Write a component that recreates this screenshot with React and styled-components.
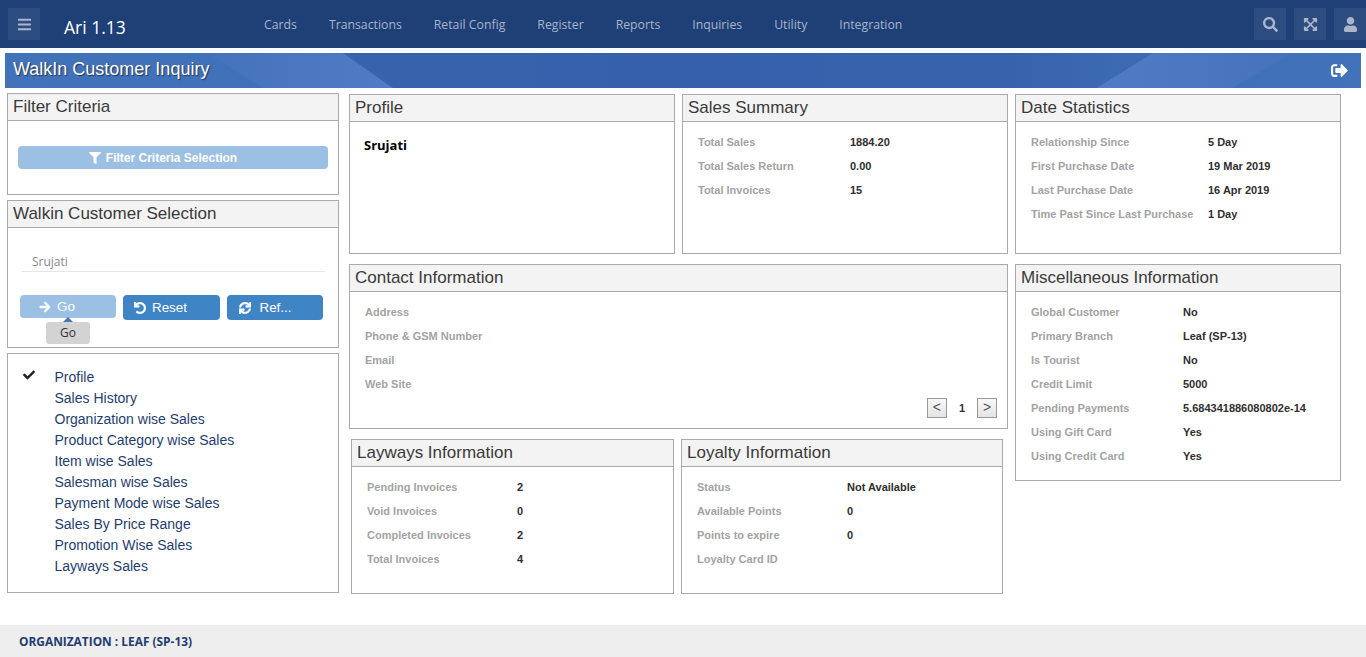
import React from "react";
import styled, { createGlobalStyle } from "styled-components";
import {
  FaBars, FaSearch, FaExpandArrowsAlt, FaUser, FaSignOutAlt, FaFilter,
  FaArrowRight, FaUndo, FaSync, FaCheck,
} from "react-icons/fa";

const Global = createGlobalStyle`
  html, body { margin: 0; padding: 0; background: #fff; }
  body { font-family: "Open Sans", "Liberation Sans", sans-serif; overflow: hidden; }
  * { box-sizing: border-box; }
`;
const Page = styled.div`
  width: 1366px; height: 657px; display: flex; flex-direction: column; position: relative;
`;
const Header = styled.header`
  height: 48px; background: #1f3f77; display: flex; align-items: flex-start;
  padding: 8px 0 0 8px; flex: none;
`;
const IconTile = styled.div`
  width: 32px; height: 32px; background: #2d4c80; color: #a9b6cb;
  display: flex; align-items: center; justify-content: center; font-size: 15px; flex: none;
`;
const Brand = styled.div`
  color: #fff; font-size: 17.5px; margin-left: 24px; width: 200px; line-height: 38px; flex: none;
`;
const Nav = styled.nav`
  display: flex; gap: 32px; height: 32px; align-items: center; flex: none;
`;
const NavItem = styled.span`
  color: #a7b4ca; font-size: 12.27px; white-space: nowrap;
`;
const HeaderTools = styled.div`
  margin-left: auto; display: flex; gap: 8px;
`;
const Banner = styled.div`
  height: 35px; margin: 5px 5px 0 5px; flex: none; position: relative; overflow: hidden;
  background: linear-gradient(90deg, #4272ba 0%, #4070b8 22%, #3763ad 26%, #3660ab 50%, #3763ad 74%, #4070b8 90%, #4272ba 100%);
  display: flex; align-items: center; justify-content: space-between; padding: 0 13px 3px 8px;
  &::before, &::after {
    content: ""; position: absolute; top: 0; bottom: 0; pointer-events: none;
  }
  &::before {
    left: 202px; width: 186px;
    background: linear-gradient(90deg, #4472bb, #4f7cc5);
    clip-path: polygon(0 0, 73% 0, 100% 100%, 30% 100%);
  }
  &::after {
    left: 1092px; width: 196px;
    background: linear-gradient(90deg, #4f7cc5, #4472bb);
    clip-path: polygon(28.5% 0, 100% 0, 69% 100%, 0 100%);
  }
`;
const BannerTitle = styled.h1`
  margin: 0; color: #fff; font: 400 18px "Liberation Sans", Arial, sans-serif;
  text-shadow: 1px 1px 1px #24344f; position: relative; z-index: 1;
`;
const ExitIcon = styled.span`
  color: #fff; font-size: 17px; display: flex; position: relative; z-index: 1; top: 1px;
`;
const Main = styled.main`
  display: flex; align-items: flex-start; padding-left: 7px; flex: 1;
`;
const LeftCol = styled.div`
  width: 332px; margin-top: 5px; display: flex; flex-direction: column; gap: 5px; flex: none;
`;
const MidCol = styled.div`
  width: 659px; margin: 6px 0 0 10px; display: flex; flex-direction: column; gap: 10px; flex: none;
`;
const RightCol = styled.div`
  width: 326px; margin: 6px 0 0 7px; display: flex; flex-direction: column; gap: 10px; flex: none;
`;
const Row = styled.div`
  display: flex; gap: 7px; padding-left: ${p => p.$inset || 0}px;
`;
const PanelBox = styled.section`
  width: ${p => (p.$w ? `${p.$w}px` : "100%")}; height: ${p => p.$h}px;
  border: 1px solid #aaa; background: #fff; flex: none; position: relative;
`;
const PanelHead = styled.div`
  height: 27px; background: #f3f3f3; border-bottom: 1px solid #aaa;
  font: 400 17px/25px "Liberation Sans", Arial, sans-serif; color: #3a3a3a; padding-left: 5px;
  white-space: nowrap;
`;
const PanelBody = styled.div`
  padding: 8px 0 0 15px;
`;
const Info = styled.div`
  display: flex; height: 24px; align-items: center;
  font: 700 11px "Liberation Sans", Arial, sans-serif; white-space: nowrap;
`;
const InfoLabel = styled.span`
  color: #a3a3a3; width: ${p => p.$w}px; flex: none;
`;
const InfoValue = styled.span` color: #2f2f2f; `;
const Name = styled.div`
  font: 700 13px "Open Sans", sans-serif; color: #000; padding: 14px 0 0 14px;
`;
const WideButton = styled.button`
  display: flex; align-items: center; justify-content: center; gap: 5px;
  width: 310px; height: 23px; margin: 25px 0 0 10px; border: 0; border-radius: 4px;
  background: #9cc0e3; color: #fff; font: 700 12px "Liberation Sans", Arial, sans-serif;
  padding: 0 20px 0 0;
  svg { font-size: 12px; }
`;
const CustomerName = styled.div`
  margin: 24px 13px 0 14px; height: 20px; padding-left: 10px; border-bottom: 1px solid #e6e6e6;
  font: 400 12px/20px "Open Sans", sans-serif; color: #888;
`;
const Buttons = styled.div`
  display: flex; gap: 7px; margin: 23px 0 0 12px; position: relative;
`;
const ActionButton = styled.button`
  width: ${p => p.$w || 96}px; height: ${p => (p.$faded ? 23 : 25)}px; border: 0; border-radius: 4px;
  padding: 0 ${p => p.$pr || 22}px 0 0;
  background: ${p => (p.$faded ? "#9cc0e3" : "#3f85c6")}; color: #fff;
  display: flex; align-items: center; justify-content: center; gap: ${p => p.$gap || 6}px;
  font: 400 13.4px "Liberation Sans", Arial, sans-serif;
  svg { font-size: 12px; stroke: currentColor; stroke-width: 24; }
`;
const Tip = styled.div`
  position: absolute; left: 26px; top: 27px; width: 44px; height: 22px; border-radius: 3px;
  background: #d3d3d3; color: #333; font: 400 12px/22px "Open Sans", sans-serif; text-align: center;
  &::before {
    content: ""; position: absolute; left: 17px; top: -5px; border: 5px solid transparent;
    border-top: 0; border-bottom-color: #4d73b5;
  }
`;
const MenuList = styled.ul`
  list-style: none; margin: 0; padding: 13px 0 0 46.5px;
`;
const MenuItem = styled.li`
  height: 21px; font: 400 14px/21px "Liberation Sans", Arial, sans-serif; color: #1f3d6f; position: relative;
  white-space: nowrap;
`;
const Tick = styled.span`
  position: absolute; left: -31.5px; top: 2px; font-size: 12px; color: #222; display: flex;
`;
const Pager = styled.div`
  position: absolute; right: 10px; bottom: 10px; display: flex; align-items: center; gap: 12px;
`;
const PageBtn = styled.span`
  width: 20px; height: 20px; border: 1px solid #999;
  background: linear-gradient(#f8f8f8, #e4e4e4); color: #555;
  font: 400 14px/17px "Liberation Sans", sans-serif; text-align: center;
`;
const PageNum = styled.span` font: 700 11px "Liberation Sans", sans-serif; color: #333; `;
const Footer = styled.footer`
  position: absolute; left: 0; right: 0; bottom: 0; height: 32px; background: #eeeeee;
  padding-left: 19px; font: 700 11.9px/32px "Open Sans", sans-serif; color: #1f3d6f;
`;

const InfoList = ({ rows, w }) => (
  <PanelBody>
    {rows.map(([k, v]) => (
      <Info key={k}><InfoLabel $w={w}>{k}</InfoLabel><InfoValue>{v}</InfoValue></Info>
    ))}
  </PanelBody>
);

const Panel = ({ title, w, h, children }) => (
  <PanelBox $w={w} $h={h}>
    {title && <PanelHead>{title}</PanelHead>}
    {children}
  </PanelBox>
);

const nav = ["Cards", "Transactions", "Retail Config", "Register", "Reports", "Inquiries", "Utility", "Integration"];
const menu = ["Profile", "Sales History", "Organization wise Sales", "Product Category wise Sales", "Item wise Sales", "Salesman wise Sales", "Payment Mode wise Sales", "Sales By Price Range", "Promotion Wise Sales", "Layways Sales"];

export default function App() {
  return (
    <Page>
      <Global />
      <Header>
        <IconTile><FaBars /></IconTile>
        <Brand>Ari 1.13</Brand>
        <Nav>{nav.map(n => <NavItem key={n}>{n}</NavItem>)}</Nav>
        <HeaderTools>
          <IconTile><FaSearch /></IconTile>
          <IconTile><FaExpandArrowsAlt /></IconTile>
          <IconTile><FaUser /></IconTile>
        </HeaderTools>
      </Header>
      <Banner>
        <BannerTitle>WalkIn Customer Inquiry</BannerTitle>
        <ExitIcon><FaSignOutAlt /></ExitIcon>
      </Banner>
      <Main>
        <LeftCol>
          <Panel title="Filter Criteria" h={102}>
            <WideButton><FaFilter /> Filter Criteria Selection</WideButton>
          </Panel>
          <Panel title="Walkin Customer Selection" h={148}>
            <CustomerName>Srujati</CustomerName>
            <Buttons>
              <ActionButton $faded><FaArrowRight /> Go</ActionButton>
              <ActionButton $w={97}><FaUndo /> Reset</ActionButton>
              <ActionButton $pr={20} $gap={9}><FaSync /> Ref...</ActionButton>
              <Tip>Go</Tip>
            </Buttons>
          </Panel>
          <Panel h={240}>
            <MenuList>
              {menu.map((m, i) => (
                <MenuItem key={m}>{i === 0 && <Tick><FaCheck /></Tick>}{m}</MenuItem>
              ))}
            </MenuList>
          </Panel>
        </LeftCol>
        <MidCol>
          <Row>
            <Panel title="Profile" w={326} h={160}><Name>Srujati</Name></Panel>
            <Panel title="Sales Summary" w={326} h={160}>
              <InfoList w={152} rows={[["Total Sales", "1884.20"], ["Total Sales Return", "0.00"], ["Total Invoices", "15"]]} />
            </Panel>
          </Row>
          <Panel title="Contact Information" h={165}>
            <InfoList w={152} rows={[["Address", ""], ["Phone & GSM Number", ""], ["Email", ""], ["Web Site", ""]]} />
            <Pager><PageBtn>&lt;</PageBtn><PageNum>1</PageNum><PageBtn>&gt;</PageBtn></Pager>
          </Panel>
          <Row $inset={2}>
            <Panel title="Layways Information" w={323} h={155}>
              <InfoList w={150} rows={[["Pending Invoices", "2"], ["Void Invoices", "0"], ["Completed Invoices", "2"], ["Total Invoices", "4"]]} />
            </Panel>
            <Panel title="Loyalty Information" w={322} h={155}>
              <InfoList w={150} rows={[["Status", "Not Available"], ["Available Points", "0"], ["Points to expire", "0"], ["Loyalty Card ID", ""]]} />
            </Panel>
          </Row>
        </MidCol>
        <RightCol>
          <Panel title="Date Statistics" h={160}>
            <InfoList w={177} rows={[["Relationship Since", "5 Day"], ["First Purchase Date", "19 Mar 2019"], ["Last Purchase Date", "16 Apr 2019"], ["Time Past Since Last Purchase", "1 Day"]]} />
          </Panel>
          <Panel title="Miscellaneous Information" h={217}>
            <InfoList w={152} rows={[["Global Customer", "No"], ["Primary Branch", "Leaf (SP-13)"], ["Is Tourist", "No"], ["Credit Limit", "5000"], ["Pending Payments", "5.684341886080802e-14"], ["Using Gift Card", "Yes"], ["Using Credit Card", "Yes"]]} />
          </Panel>
        </RightCol>
      </Main>
      <Footer>ORGANIZATION : LEAF (SP-13)</Footer>
    </Page>
  );
}
